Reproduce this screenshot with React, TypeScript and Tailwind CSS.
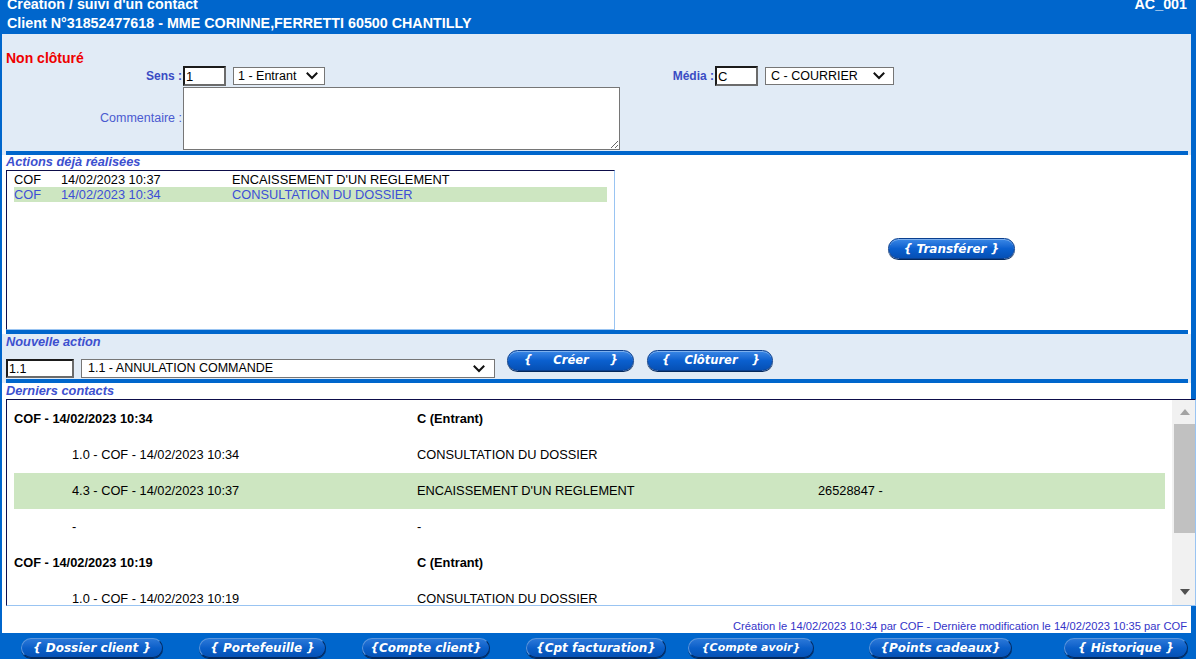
import React from "react";

function Chevron({ className }: { className?: string }) {
  return (
    <svg className={className} viewBox="0 0 12 8" width="12" height="8" fill="none">
      <path d="M1.5 1.5 L6 6 L10.5 1.5" stroke="#111" strokeWidth="2" strokeLinecap="square" />
    </svg>
  );
}

const contacts = [
  { bold: true, c1: "COF - 14/02/2023 10:34", c2: "C (Entrant)", c3: "" },
  { c1: "1.0 - COF - 14/02/2023 10:34", c2: "CONSULTATION DU DOSSIER", c3: "" },
  { green: true, c1: "4.3 - COF - 14/02/2023 10:37", c2: "ENCAISSEMENT D'UN REGLEMENT", c3: "26528847 -" },
  { c1: "-", c2: "-", c3: "" },
  { bold: true, c1: "COF - 14/02/2023 10:19", c2: "C (Entrant)", c3: "" },
  { c1: "1.0 - COF - 14/02/2023 10:19", c2: "CONSULTATION DU DOSSIER", c3: "" },
];

const bottomButtons = [
  { label: "{ Dossier client }", w: "w-[142px]", ml: "ml-0", size: "text-[12px]" },
  { label: "{ Portefeuille }", w: "w-[127px]", ml: "ml-[36px]", size: "text-[12px]" },
  { label: "{Compte client}", w: "w-[128px]", ml: "ml-[36px]", size: "text-[12px]" },
  { label: "{Cpt facturation}", w: "w-[140px]", ml: "ml-[36px]", size: "text-[12px]" },
  { label: "{Compte avoir}", w: "w-[126px]", ml: "ml-[22px]", size: "text-[11px]" },
  { label: "{Points cadeaux}", w: "w-[143px]", ml: "ml-[55px]", size: "text-[12px]" },
  { label: "{ Historique }", w: "w-[124px]", ml: "ml-[52px]", size: "text-[12px]" },
];

export default function App() {
  return (
    <div className="w-[1196px] h-[659px] overflow-hidden bg-[#0066cc] font-['Liberation_Sans',Arial,sans-serif] text-[12.8px] text-black flex flex-col">
      {/* Header */}
      <div className="h-[34px] shrink-0 pl-[7px] pr-[9px] text-white font-bold text-[14.3px] flex flex-col">
        <div className="mt-[-4px] h-[16px] leading-[16px] flex justify-between">
          <span>Création / suivi d'un contact</span>
          <span>AC_001</span>
        </div>
        <div className="mt-[3px] h-[16px] leading-[16px]">
          Client N°31852477618 - MME CORINNE,FERRETTI 60500 CHANTILLY
        </div>
      </div>

      <div className="ml-[2px] w-[1189px] shrink-0">
        {/* Section 1 */}
        <div className="h-[117px] bg-[#e1ebf6] pt-[16px]">
          <div className="h-[16px] leading-[16px] pl-[4px] text-[14px] font-bold text-[#ee0000]">Non clôturé</div>
          <div className="flex items-center h-[20px]">
            <div className="w-[181px] text-right text-[12px] font-bold text-[#3a4bc4] pr-[1px]">Sens :</div>
            <input
              readOnly
              value="1"
              className="w-[43px] h-[20px] border-2 border-t-[#1b1b1b] border-l-[#1b1b1b] border-b-[#6b6b6b] border-r-[#6b6b6b] bg-white text-[13px] pl-[1px] outline-none"
            />
            <div className="ml-[7px] w-[92px] h-[18px] border border-[#767676] bg-white flex items-center justify-between pl-[4px] pr-[6px] text-[12.5px]">
              <span>1 - Entrant</span>
              <Chevron />
            </div>
            <div className="w-[390px] text-right text-[12px] font-bold text-[#3a4bc4] pr-[1px]">Média :</div>
            <input
              readOnly
              value="C"
              className="w-[43px] h-[20px] border-2 border-t-[#1b1b1b] border-l-[#1b1b1b] border-b-[#6b6b6b] border-r-[#6b6b6b] bg-white text-[13px] pl-[1px] outline-none"
            />
            <div className="ml-[7px] w-[129px] h-[18px] border border-[#767676] bg-white flex items-center justify-between pl-[5px] pr-[8px] text-[12.5px]">
              <span>C - COURRIER</span>
              <Chevron />
            </div>
          </div>
          <div className="flex items-center mt-[1px]">
            <div className="w-[181px] text-right text-[12.5px] text-[#4a5ad0] pr-[1px]">Commentaire :</div>
            <textarea readOnly className="block w-[437px] h-[63px] border border-[#767676] bg-white resize outline-none" />
          </div>
        </div>
        <div className="bg-[#e1ebf6] pl-[4px] pr-[3px]">
          <div className="h-[4px] bg-[#0066cc]" />
        </div>

        {/* Section 2 : Actions déjà réalisées */}
        <div className="h-[175px] bg-white">
          <div className="h-[14px] leading-[14px] pl-[4px] italic font-bold text-[#3d50cf]">Actions déjà réalisées</div>
          <div className="flex mt-[1px]">
            <div className="ml-[4px] w-[609px] h-[160px] border border-t-[#0d0d4a] border-l-[#0d0d4a] border-r-[#99c4f2] border-b-[#99c4f2] bg-white pt-[1px]">
              <div className="ml-[7px] mr-[7px] h-[15px] leading-[15px] flex whitespace-nowrap">
                <span className="w-[47px]">COF</span>
                <span className="w-[171px]">14/02/2023 10:37</span>
                <span>ENCAISSEMENT D'UN REGLEMENT</span>
              </div>
              <div className="ml-[7px] mr-[7px] h-[15px] leading-[15px] flex whitespace-nowrap bg-[#cde6c1] text-[#3d4fd6]">
                <span className="w-[47px]">COF</span>
                <span className="w-[171px]">14/02/2023 10:34</span>
                <span>CONSULTATION DU DOSSIER</span>
              </div>
            </div>
            <div className="flex items-center pb-[3px]">
              <div className="ml-[273px] w-[127px] h-[21px] rounded-full border border-[#0a3f8f] bg-linear-to-b from-[#3a88e6] via-[#0b60cf] to-[#0650b5] shadow-[inset_0_1px_0_rgba(255,255,255,0.35),0_1px_0_#03285c] flex items-center justify-center text-white italic font-bold text-[12px] font-['DejaVu_Sans',Verdana,sans-serif] whitespace-pre">
                {"{ Transférer }"}
              </div>
            </div>
          </div>
        </div>
        <div className="bg-white pl-[4px] pr-[3px]">
          <div className="h-[4px] bg-[#0066cc]" />
        </div>

        {/* Section 3 : Nouvelle action */}
        <div className="h-[45px] bg-[#e1ebf6]">
          <div className="h-[15px] leading-[15px] pl-[4px] italic font-bold text-[#3d50cf]">Nouvelle action</div>
          <div className="flex items-start">
            <input
              readOnly
              value="1.1"
              className="ml-[4px] mt-[10px] w-[68px] h-[19px] border-2 border-t-[#1b1b1b] border-l-[#1b1b1b] border-b-[#6b6b6b] border-r-[#6b6b6b] bg-white text-[12.5px] pl-[1px] outline-none"
            />
            <div className="ml-[7px] mt-[10px] w-[414px] h-[19px] border border-[#767676] bg-white flex items-center justify-between pl-[6px] pr-[9px] text-[12.5px]">
              <span>1.1 - ANNULATION COMMANDE</span>
              <Chevron />
            </div>
            <div className="ml-[12px] mt-[1px] w-[127px] h-[21px] rounded-full border border-[#0a3f8f] bg-linear-to-b from-[#3a88e6] via-[#0b60cf] to-[#0650b5] shadow-[inset_0_1px_0_rgba(255,255,255,0.35),0_1px_0_#03285c] flex items-center justify-between pl-[16px] pr-[15px] text-white italic font-bold text-[11.5px] font-['DejaVu_Sans',Verdana,sans-serif]">
              <span>{"{"}</span>
              <span>Créer</span>
              <span>{"}"}</span>
            </div>
            <div className="ml-[13px] mt-[1px] w-[126px] h-[21px] rounded-full border border-[#0a3f8f] bg-linear-to-b from-[#3a88e6] via-[#0b60cf] to-[#0650b5] shadow-[inset_0_1px_0_rgba(255,255,255,0.35),0_1px_0_#03285c] flex items-center justify-between pl-[14px] pr-[12px] text-white italic font-bold text-[11.5px] font-['DejaVu_Sans',Verdana,sans-serif]">
              <span>{"{"}</span>
              <span>Clôturer</span>
              <span>{"}"}</span>
            </div>
          </div>
        </div>
        <div className="bg-[#e1ebf6] pl-[4px] pr-[3px]">
          <div className="h-[4px] bg-[#0066cc]" />
        </div>

        {/* Section 4 : Derniers contacts */}
        <div className="h-[250px] bg-white">
          <div className="h-[15px] leading-[15px] pl-[4px] italic font-bold text-[#3d50cf]">Derniers contacts</div>
          <div className="mt-[1px] ml-[4px] w-[1190px] h-[207px] border border-t-[#0d0d4a] border-l-[#0d0d4a] border-r-[#99c4f2] border-b-[#99c4f2] bg-white flex">
            <div className="flex-1 overflow-hidden pl-[7px] pr-[7px] pt-[1px]">
              {contacts.map((r, i) => (
                <div
                  key={i}
                  className={
                    "h-[36px] leading-[36px] flex whitespace-nowrap " +
                    (r.green ? "bg-[#cde6c1] " : "") +
                    (r.bold ? "font-bold" : "")
                  }
                >
                  <span className={"w-[403px] " + (r.bold ? "" : "pl-[58px]")}>{r.c1}</span>
                  <span className="w-[401px]">{r.c2}</span>
                  <span>{r.c3}</span>
                </div>
              ))}
            </div>
            <div className="w-[23px] h-full bg-[#f1f1f1] flex flex-col">
              <div className="h-[24px] flex items-center justify-center pl-[2px]">
                <svg width="10" height="6" viewBox="0 0 10 6">
                  <path d="M0 6 L5 0 L10 6 Z" fill="#a3a3a3" />
                </svg>
              </div>
              <div className="ml-[2px] h-[109px] bg-[#c1c1c1]" />
              <div className="flex-1" />
              <div className="h-[26px] flex items-center justify-center pl-[2px]">
                <svg width="10" height="6" viewBox="0 0 10 6">
                  <path d="M0 0 L10 0 L5 6 Z" fill="#505050" />
                </svg>
              </div>
            </div>
          </div>
          <div className="pt-[14px] h-[27px] leading-[13px] text-[11.2px] text-right pr-[4px] text-[#3434c8] whitespace-nowrap">
            Création le 14/02/2023 10:34 par COF - Dernière modification le 14/02/2023 10:35 par COF
          </div>
        </div>
      </div>

      {/* Bottom bar */}
      <div className="flex pl-[21px] pt-[5px] shrink-0">
        {bottomButtons.map((b) => (
          <div
            key={b.label}
            className={
              b.w +
              " " +
              b.ml +
              " " +
              b.size +
              " h-[20px] rounded-full border border-t-[#5b95dc] border-l-[#5b95dc] border-b-[#022a60] border-r-[#022a60] bg-linear-to-b from-[#2a78d8] via-[#0a5fc9] to-[#0652b6] shadow-[0_1px_0_#032a5e] flex items-center justify-center text-white italic font-bold font-['DejaVu_Sans',Verdana,sans-serif] whitespace-pre"
            }
          >
            {b.label}
          </div>
        ))}
      </div>
    </div>
  );
}
